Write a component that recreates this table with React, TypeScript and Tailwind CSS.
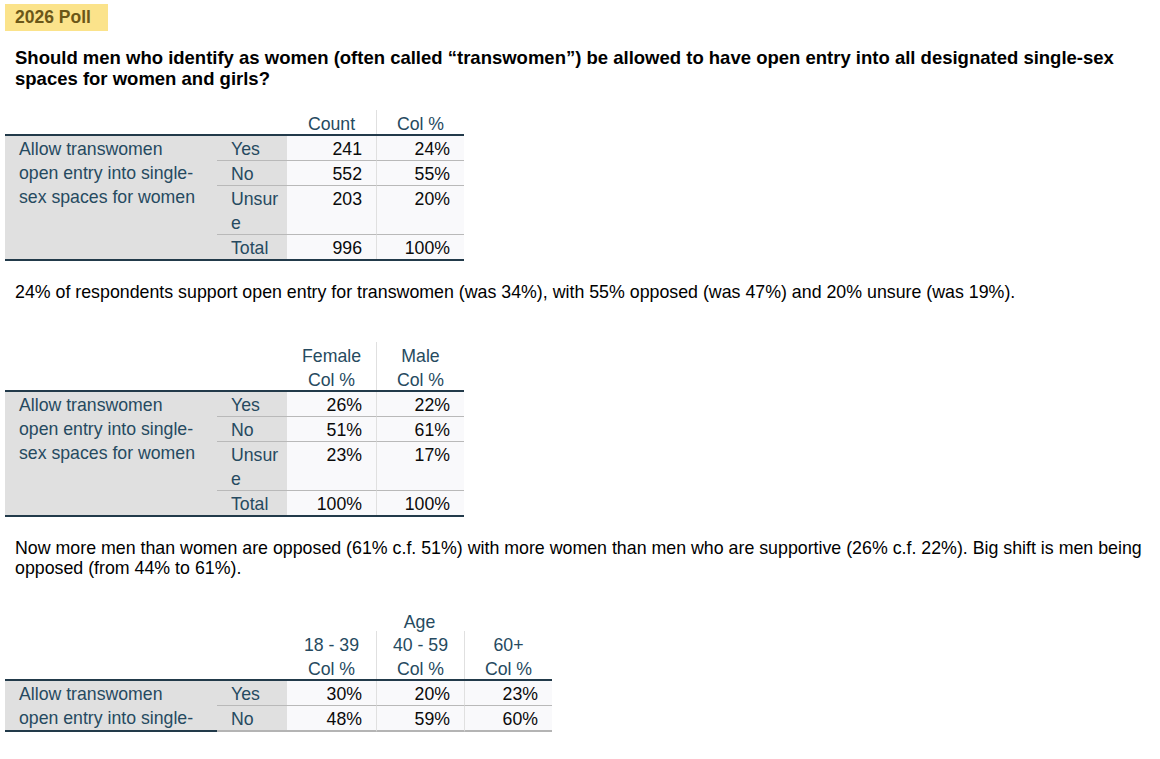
import React from "react";

type Row = { cat: string; vals: string[] };

const LABEL = "Allow transwomen open entry into single-sex spaces for women";

function HeaderCells({ lines, first }: { lines: string[]; first: boolean }) {
  return (
    <div
      className={`flex flex-col items-center justify-end text-[#264a60] leading-[24px] ${
        first ? "" : "border-l border-[#e0e0e0]"
      }`}
    >
      {lines.map((l, i) => (
        <div key={i} className="translate-y-[2px]">
          {l}
        </div>
      ))}
    </div>
  );
}

function CrossTab({
  headers,
  rows,
  cols,
  clipped,
  topLabel,
  label = LABEL,
}: {
  headers: string[][];
  rows: Row[];
  cols: string;
  clipped?: boolean;
  topLabel?: string;
  label?: string;
}) {
  return (
    <div className="ml-[5px] w-fit text-[17.7px] text-[#264a60]">
      {topLabel && (
        <div className={`grid ${cols}`}>
          <div className="col-span-2" />
          <div className="col-span-3 text-center leading-[22px] translate-y-[2px]">{topLabel}</div>
        </div>
      )}
      <div className={`grid ${cols} border-b-2 border-[#223a4a]`}>
        <div className="col-span-2" />
        {headers.map((h, i) => (
          <HeaderCells key={i} lines={h} first={i === 0} />
        ))}
      </div>
      <div className={`grid ${cols}`}>
        <div
          className={`bg-[#e0e0e0] pl-[14px] pr-[17px] leading-[24px] pt-[1px] ${
            clipped ? "border-b-2 border-[#223a4a]" : ""
          }`}
          style={{ gridRow: `span ${rows.length} / span ${rows.length}` }}
        >
          {label}
        </div>
        {rows.map((r, ri) => {
          const last = ri === rows.length - 1;
          const border = last
            ? clipped
              ? "border-b-2 border-[#b4b4b4]"
              : ""
            : "border-b border-[#b9b9b9]";
          return (
            <React.Fragment key={ri}>
              <div
                className={`bg-[#e0e0e0] pl-[14px] pr-[6px] leading-[24px] break-all ${border}`}
              >
                <div className="translate-y-[1px]">{r.cat}</div>
              </div>
              {r.vals.map((v, vi) => (
                <div
                  key={vi}
                  className={`bg-[#f9f9fb] text-right pr-[14px] leading-[24px] text-[#0a0a0a] ${border} ${
                    vi === 0 ? "" : "border-l border-l-[#e0e0e0]"
                  }`}
                >
                  <div className="translate-y-[1px]">{v}</div>
                </div>
              ))}
            </React.Fragment>
          );
        })}
      </div>
      {!clipped && <div className="h-[2px] bg-[#223a4a]" />}
    </div>
  );
}

export default function App() {
  return (
    <div className="w-[1160px] h-[759px] overflow-hidden bg-white font-['Liberation_Sans',Arial,sans-serif] text-black">
      <div className="pt-[4px] pl-[5px]">
        <span className="inline-block h-[27px] leading-[27px] pl-[10px] pr-[17px] bg-[#fbe38b] text-[#6b5718] font-bold text-[17.5px]">
          2026 Poll
        </span>
      </div>
      <h1 className="mt-[16px] pl-[15px] pr-[5px] text-[18.5px] leading-[21px] font-bold">
        Should men who identify as women (often called “transwomen”) be allowed to have open entry into all designated single-sex spaces for women and girls?
      </h1>

      <div className="mt-[21px]">
        <CrossTab
          cols="grid-cols-[212px_70px_89px_88px]"
          headers={[["Count"], ["Col %"]]}
          rows={[
            { cat: "Yes", vals: ["241", "24%"] },
            { cat: "No", vals: ["552", "55%"] },
            { cat: "Unsure", vals: ["203", "20%"] },
            { cat: "Total", vals: ["996", "100%"] },
          ]}
        />
      </div>

      <p className="mt-[21px] pl-[15px] pr-[5px] text-[17.8px] leading-[20px]">
        24% of respondents support open entry for transwomen (was 34%), with 55% opposed (was 47%) and 20% unsure (was 19%).
      </p>

      <div className="mt-[40px]">
        <CrossTab
          cols="grid-cols-[212px_70px_89px_88px]"
          headers={[
            ["Female", "Col %"],
            ["Male", "Col %"],
          ]}
          rows={[
            { cat: "Yes", vals: ["26%", "22%"] },
            { cat: "No", vals: ["51%", "61%"] },
            { cat: "Unsure", vals: ["23%", "17%"] },
            { cat: "Total", vals: ["100%", "100%"] },
          ]}
        />
      </div>

      <p className="mt-[21px] pl-[15px] pr-[5px] text-[17.8px] leading-[20px]">
        Now more men than women are opposed (61% c.f. 51%) with more women than men who are supportive (26% c.f. 22%). Big shift is men being opposed (from 44% to 61%).
      </p>

      <div className="mt-[31px]">
        <CrossTab
          cols="grid-cols-[212px_70px_89px_88px_88px]"
          topLabel="Age"
          clipped
          label="Allow transwomen open entry into single-"
          headers={[
            ["18 - 39", "Col %"],
            ["40 - 59", "Col %"],
            ["60+", "Col %"],
          ]}
          rows={[
            { cat: "Yes", vals: ["30%", "20%", "23%"] },
            { cat: "No", vals: ["48%", "59%", "60%"] },
          ]}
        />
      </div>
    </div>
  );
}
